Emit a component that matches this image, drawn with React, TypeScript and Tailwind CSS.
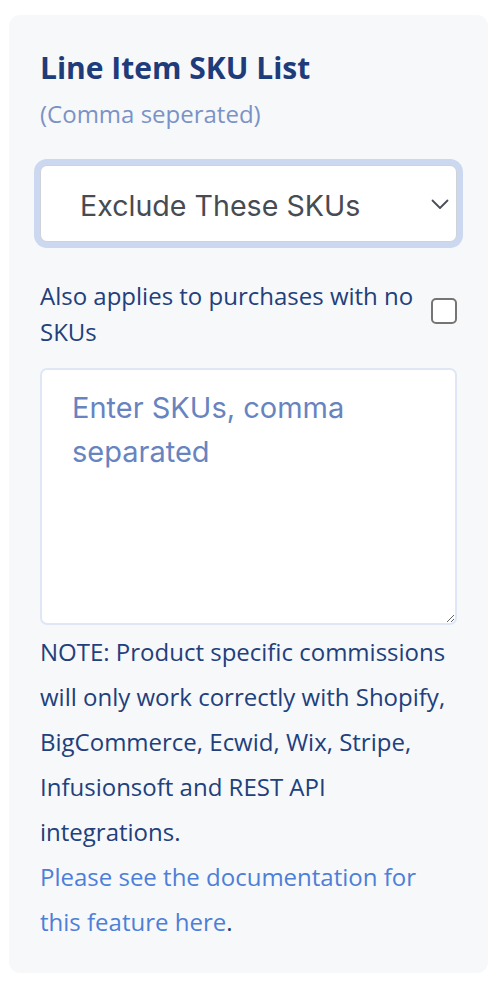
import React from "react";

export default function App() {
  return (
    <div className="min-h-[984px] w-[500px] bg-white pt-[15px] pl-[9px]">
      <div
        className="w-[479px] rounded-[11px] bg-[#f7f8fa] px-[31px] pt-[35px] pb-[29px]"
        style={{ fontFamily: '"Open Sans", "Noto Sans", sans-serif' }}
      >
        <h2 className="text-[30px] font-bold leading-[36px] text-[#1e3c7a]">
          Line Item SKU List
        </h2>
        <p className="mt-[10px] text-[24px] leading-[36px] text-[#7a93c6]">
          (Comma seperated)
        </p>

        <div className="relative mt-[33px]">
          <select
            defaultValue="exclude"
            className="block h-[77px] w-[417px] appearance-none rounded-[7px] border border-[#cfd3d9] bg-white pl-[39px] pt-[5px] text-[28.6px] text-[#474b52] shadow-[0_0_0_6px_#cbd8ef] outline-none"
            style={{ fontFamily: 'Inter, "Liberation Sans", sans-serif' }}
          >
            <option value="include">Include These SKUs</option>
            <option value="exclude">Exclude These SKUs</option>
          </select>
          <svg
            className="pointer-events-none absolute right-[8px] top-[34px]"
            width="18"
            height="11"
            viewBox="0 0 18 11"
            fill="none"
          >
            <path d="M1.5 1.5 L9 9 L16.5 1.5" stroke="#4a4f56" strokeWidth="1.8" strokeLinecap="round" strokeLinejoin="round" />
          </svg>
        </div>

        <div className="mt-[36px] flex items-start">
          <label className="w-[386px] text-[24px] leading-[36px] text-[#21407c]">
            Also applies to purchases with no SKUs
          </label>
          <input
            type="checkbox"
            className="ml-[6px] mt-[20px] h-[26px] w-[26px] appearance-none rounded-[5px] border-2 border-[#757575] bg-white"
          />
        </div>

        <textarea
          placeholder="Enter SKUs, comma separated"
          className="mt-[18px] block h-[257px] w-[417px] rounded-[7px] border-2 border-[#dfe7f6] bg-white pl-[30px] pr-[30px] pt-[16px] text-[29px] leading-[44px] text-[#474b52] outline-none placeholder:text-[#6784c0]"
          style={{ fontFamily: 'Inter, "Liberation Sans", sans-serif' }}
        />

        <p className="mt-[4px] text-[24px] leading-[45px] text-[#21407c]">
          NOTE: Product specific commissions will only work correctly with Shopify, BigCommerce, Ecwid, Wix, Stripe, Infusionsoft and REST API integrations.
        </p>
        <p className="text-[24px] leading-[45px] text-[#21407c]">
          <a href="#" className="text-[#4d7fd8]">
            Please see the documentation for this feature here
          </a>
          .
        </p>
      </div>
    </div>
  );
}
